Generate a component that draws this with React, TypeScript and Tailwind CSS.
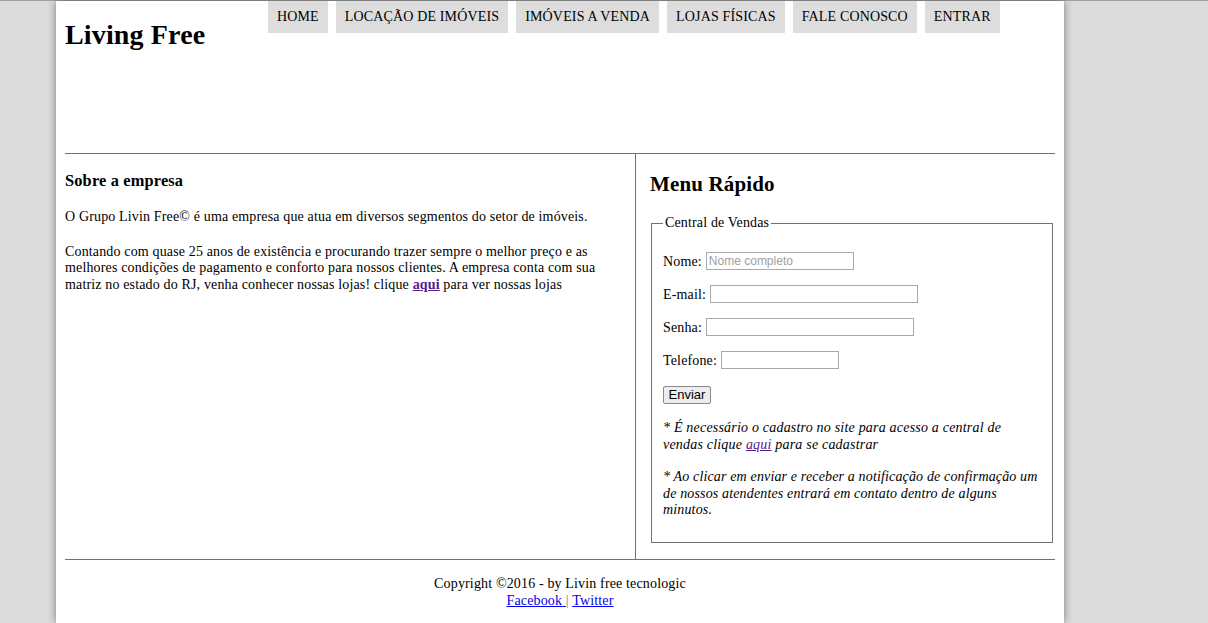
import React from "react";

const links = ["HOME", "LOCAÇÃO DE IMÓVEIS", "IMÓVEIS A VENDA", "LOJAS FÍSICAS", "FALE CONOSCO", "ENTRAR"];

function Campo({ label, width, placeholder }: { label: string; width: string; placeholder?: string }) {
  return (
    <div className="flex items-center h-[18px] mb-[15px]">
      <label className="mr-[4px]">{label}</label>
      <input
        type="text"
        placeholder={placeholder}
        className={`${width} h-[18px] border border-[#a9a9a9] bg-white px-[2px] text-[12px] tracking-normal font-['Liberation_Sans',sans-serif] placeholder:text-[#a0a0a0] outline-none`}
      />
    </div>
  );
}

export default function App() {
  return (
    <div className="min-h-screen bg-[#dcdcdc] border-t border-[#a0a0a0] font-['Liberation_Serif',serif] text-[14px] tracking-[0.15px] text-black">
      <div className="ml-[56px] w-[1008px] min-h-[622px] bg-white shadow-[0_0_8px_rgba(0,0,0,0.45)] px-[9px]">
        {/* cabeçalho */}
        <div className="flex h-[152px]">
          <h1 className="w-[203px] mt-[18px] text-[28px] leading-[32px] font-bold">Living Free</h1>
          <ul className="flex gap-2 h-8">
            {links.map((l) => (
              <li key={l} className="h-8 flex items-center px-[9px] bg-[#dddddd] leading-4">
                {l}
              </li>
            ))}
          </ul>
        </div>
        <hr className="border-t border-[#707070]" />

        <div className="flex">
          <div className="w-[571px] border-r border-[#707070] pr-[21px] pb-[40px]">
            <h3 className="mt-[17px] text-[16.4px] leading-[19px] font-bold">Sobre a empresa</h3>
            <p className="mt-[19px] leading-[16.5px]">
              O Grupo Livin Free© é uma empresa que atua em diversos segmentos do setor de imóveis.
            </p>
            <p className="mt-[18px] leading-[16.5px]">
              Contando com quase 25 anos de existência e procurando trazer sempre o melhor preço e as melhores
              condições de pagamento e conforto para nossos clientes. A empresa conta com sua matriz no estado do RJ,
              venha conhecer nossas lojas! clique{" "}
              <a href="#" className="font-bold text-[#551a8b] underline">
                aqui
              </a>{" "}
              para ver nossas lojas
            </p>
          </div>

          <div className="flex-1 pl-[14px] pr-[2px]">
            <h2 className="mt-[18px] text-[21px] leading-[24px] font-bold">Menu Rápido</h2>
            <fieldset className="mt-[19px] ml-[1px] mb-[16px] border border-[#707070] pl-[11px] pr-[13px] pt-[21px] pb-[23px]">
              <legend className="px-[2px] leading-4">Central de Vendas</legend>
              <Campo label="Nome:" width="w-[148px]" placeholder="Nome completo" />
              <Campo label="E-mail:" width="w-[208px]" />
              <Campo label="Senha:" width="w-[208px]" />
              <Campo label="Telefone:" width="w-[118px]" />
              <button className="h-[18px] w-[48px] border border-[#8a8a8a] rounded-[2px] bg-[#ededed] text-[13px] leading-[16px] tracking-normal font-['Liberation_Sans',sans-serif]">
                Enviar
              </button>
              <p className="mt-[15px] italic leading-[16.5px] tracking-[0.2px]">
                * É necessário o cadastro no site para acesso a central de vendas clique{" "}
                <a href="#" className="text-[#551a8b] underline">
                  aqui
                </a>{" "}
                para se cadastrar
              </p>
              <p className="mt-[16px] italic leading-[16.5px] tracking-[0.15px]">
                * Ao clicar em enviar e receber a notificação de confirmação um de nossos atendentes entrará em
                contato dentro de alguns minutos.
              </p>
            </fieldset>
          </div>
        </div>

        <hr className="border-t border-[#707070]" />
        <div className="text-center pt-[15px] pb-[12px] leading-[17px]">
          <p>Copyright ©2016 - by Livin free tecnologic</p>
          <p>
            <a href="#" className="text-[#0000ee] underline">
              Facebook{" "}
            </a>
            <span className="text-[#777]">|</span>{" "}
            <a href="#" className="text-[#0000ee] underline">
              Twitter
            </a>
          </p>
        </div>
      </div>
    </div>
  );
}
